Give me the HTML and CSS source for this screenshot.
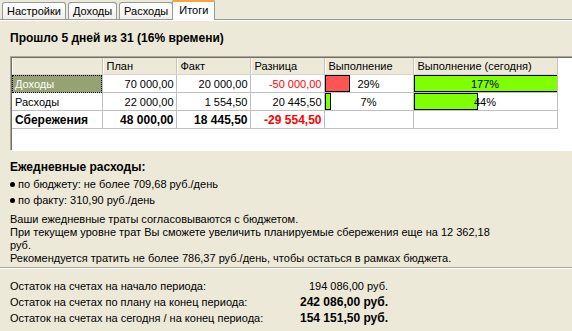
FILE: index.html
```html
<!doctype html>
<html>
	<head>
		<meta charset="utf-8">
		<title>Итоги</title>
		<link rel="stylesheet" href="styles.css">
	</head>
	<body>
		<div class="tabs">
			<div class="tab">Настройки</div>
			<div class="tab">Доходы</div>
			<div class="tab">Расходы</div>
			<div class="tab active">Итоги</div>
		</div>
		<div class="page">
			<div class="title">Прошло 5 дней из 31 (16% времени)</div>
			<div class="grid">
				<table>
					<colgroup>
						<col class="c-name">
						<col class="c-num">
						<col class="c-num">
						<col class="c-num">
						<col class="c-pct">
						<col class="c-today">
					</colgroup>
					<tr>
						<th></th>
						<th>План</th>
						<th>Факт</th>
						<th>Разница</th>
						<th>Выполнение</th>
						<th>Выполнение (сегодня)</th>
					</tr>
					<tr>
						<td class="name selected">Доходы</td>
						<td class="num">70 000,00</td>
						<td class="num">20 000,00</td>
						<td class="num neg">-50 000,00</td>
						<td class="pct"><span class="bar red" style="width:25px"></span><span class="val">29%</span></td>
						<td class="pct"><span class="bar green" style="width:145px"></span><span class="val">177%</span></td>
					</tr>
					<tr>
						<td class="name">Расходы</td>
						<td class="num">22 000,00</td>
						<td class="num">1 554,50</td>
						<td class="num">20 445,50</td>
						<td class="pct"><span class="bar green" style="width:6px"></span><span class="val">7%</span></td>
						<td class="pct"><span class="bar green" style="width:64px"></span><span class="val">44%</span></td>
					</tr>
					<tr class="total">
						<td class="name">Сбережения</td>
						<td class="num">48 000,00</td>
						<td class="num">18 445,50</td>
						<td class="num neg">-29 554,50</td>
						<td class="pct"></td>
						<td class="pct"></td>
					</tr>
				</table>
			</div>
			<div class="daily">
				<div class="daily-title">Ежедневные расходы:</div>
				<ul>
					<li>по бюджету: не более 709,68 руб./день</li>
					<li>по факту: 310,90 руб./день</li>
				</ul>
				<p>
					Ваши ежедневные траты согласовываются с бюджетом.<br>
					При текущем уровне трат Вы сможете увеличить планируемые сбережения еще на 12 362,18<br>
					руб.<br>
					Рекомендуется тратить не более 786,37 руб./день, чтобы остаться в рамках бюджета.
				</p>
			</div>
		</div>
		<div class="totals">
			<div class="row"><span>Остаток на счетах на начало периода:</span><span>194 086,00 руб.</span></div>
			<div class="row"><span>Остаток на счетах по плану на конец периода:</span><b>242 086,00 руб.</b></div>
			<div class="row"><span>Остаток на счетах на сегодня / на конец периода:</span><b>154 151,50 руб.</b></div>
		</div>
	</body>
</html>
```

FILE: styles.css
```css
* {
	margin: 0px;
	padding: 0px;
}
body {
	width: 572px;
	height: 331px;
	overflow: hidden;
	background: #ECE9D8;
	font: 11px "Liberation Sans", Arial, sans-serif;
	color: #000;
}
.tabs {
	display: flex;
	align-items: flex-end;
	height: 19px;
	padding-left: 2px;
	border-bottom: 1px solid #919B9C;
	box-shadow: 0 1px 0 #fff;
}
.tab {
	height: 16px;
	line-height: 17px;
	padding: 0 4px;
	margin-right: 2px;
	border: 1px solid #919B9C;
	border-bottom: none;
	border-radius: 3px 3px 0 0;
	background: linear-gradient(#fff, #F0EFEA);
}
.tab.active {
	margin: 0 0 -1px -3px;
	padding: 0 6px;
	border-top: 3px solid #F3A73C;
	background: #FCFCFE;
	box-sizing: border-box;
	height: 21px;
	line-height: 16px;
}
.page {
	padding-left: 10px;
}
.title {
	margin-top: 11px;
	line-height: 14px;
	font-size: 12px;
	font-weight: bold;
}
.grid {
	margin-top: 11px;
	margin-right: -20px;
	height: 92px;
	background: #fff;
	border: 1px solid;
	border-color: #ACA899 #fff #fff #ACA899;
	box-shadow: inset 1px 1px 0 #716F64;
	padding: 1px 0 0 1px;
}
table {
	border-collapse: collapse;
	table-layout: fixed;
	width: 545px;
}
.c-name { width: 90px; }
.c-num { width: 74px; }
.c-pct { width: 89px; }
.c-today { width: 144px; }
th {
	height: 16px;
	background: #ECE9D8;
	font-weight: normal;
	text-align: left;
	padding: 0 4px;
	border-right: 1px solid #C7C5B2;
	box-shadow: inset 1px 0 0 #fff;
	border-bottom: 1px solid #D8D5C6;
}
td {
	height: 17px;
	padding: 0 2px;
	border: 1px solid #C0C0C0;
	white-space: nowrap;
	overflow: hidden;
}
tr td:first-child {
	border-left: none;
}
td.name {
	padding-left: 3px;
}
td.selected {
	background: #97A274;
	color: #fff;
	outline: 1px dotted #000;
	outline-offset: -1px;
}
td.num {
	text-align: right;
}
td.neg {
	color: #FF0000;
}
.total td {
	font-size: 12px;
	font-weight: bold;
}
td.pct {
	position: relative;
	text-align: center;
	padding: 0;
}
.bar {
	position: absolute;
	left: 0;
	top: 0;
	bottom: 0;
	border: 1px solid #000;
	box-sizing: border-box;
}
.bar.red {
	background: #FF5555;
}
.bar.green {
	background: #80FF00;
}
.val {
	position: relative;
}
.daily {
	margin-top: 9px;
}
.daily-title {
	font-size: 12px;
	font-weight: bold;
	line-height: 14px;
}
.daily ul {
	list-style: none;
	margin-top: 2px;
}
.daily li {
	line-height: 16px;
}
.daily li:before {
	content: "";
	display: inline-block;
	width: 5px;
	height: 5px;
	margin-right: 3px;
	border-radius: 50%;
	background: #000;
	vertical-align: 1px;
}
.daily p {
	margin-top: 5px;
	line-height: 13px;
	white-space: nowrap;
}
.totals {
	margin-top: 2px;
	padding: 10px 0 0 10px;
	border-top: 1px solid #ACA899;
	box-shadow: inset 0 1px 0 #fff;
}
.totals .row {
	display: flex;
	justify-content: space-between;
	width: 378px;
	line-height: 16px;
}
.totals b {
	font-size: 12px;
}
```
